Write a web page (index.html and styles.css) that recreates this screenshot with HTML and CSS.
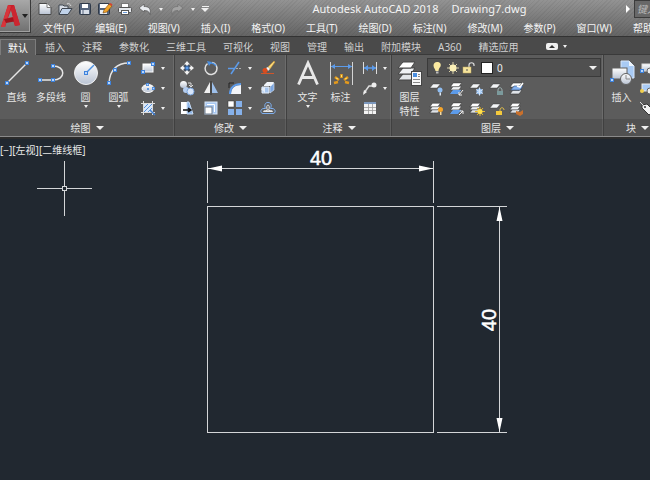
FILE: index.html
```html
<!DOCTYPE html>
<html lang="zh-CN">
  <head>
    <title>Autodesk AutoCAD 2018 - Drawing7.dwg</title>
    <meta charset="UTF-8">
    <meta name="viewport" content="width=device-width, initial-scale=1.0">
    <link rel="stylesheet" href="styles.css">
  </head>

  <body>

    <!-- shared icon parts -->
    <svg class="defs" aria-hidden="true">
      <defs>
        <linearGradient id="metal" x1="0" y1="0" x2="0" y2="1">
          <stop offset="0" stop-color="#ffffff"/>
          <stop offset="1" stop-color="#b9c3d3"/>
        </linearGradient>
        <symbol id="node" viewBox="0 0 4 4">
          <rect x="0.5" y="0.5" width="3" height="3" fill="#b9d6fa" stroke="#3d82dc"/>
        </symbol>
        <symbol id="sheet" viewBox="0 0 16 16">
          <path d="M5 3h9l-4 5H1z" fill="#f4f6f8" stroke="#3c3c3c" stroke-width="0.6"/>
        </symbol>
        <symbol id="stack" viewBox="0 0 16 16">
          <path d="M4 9h9l-3 4H1z" fill="#dfe3e8" stroke="#333" stroke-width="0.6"/>
          <path d="M4 5.500h9l-3 4H1z" fill="#eef0f3" stroke="#333" stroke-width="0.6"/>
          <path d="M4 2h9l-3 4H1z" fill="#fff" stroke="#333" stroke-width="0.6"/>
        </symbol>
      </defs>
    </svg>

    <header class="titlebar">
      <button class="app-menu" aria-label="应用程序菜单">
        <svg width="22" height="24" viewBox="0 0 22 24">
          <path d="M1 23L8 1h6l6 20-5 1-2-6-6 1-2 6z" fill="#c8202a"/>
          <path d="M11 6L8 14l5-1z" fill="#8b8b8b"/>
          <path d="M1 23L8 1l3 1-6 21z" fill="#d8353b"/>
          <path d="M4 15l12-2 1 4-11 2z" fill="#a3141d"/>
          <path d="M14 1l6 20-5 1-4-17z" fill="#cc2630"/>
        </svg>
        <span class="arrow dark"></span>
      </button>

      <div class="titlebar-rows">
        <div class="title-row">
          <div class="quick-access">
            <button aria-label="新建"><svg width="16" height="14" viewBox="0 0 16 14"><path d="M2 1.500h8l4 4v7H2z" fill="url(#metal)" stroke="#4a4a4a"/><path d="M10 1.500v4h4" fill="#fff" stroke="#777"/></svg></button>
            <button aria-label="打开"><svg width="16" height="14" viewBox="0 0 16 14"><path d="M2 12V3h4l1 1h4v3" fill="#d9dee6" stroke="#3f4650"/><path d="M2 12.500l3-6h10l-4 6z" fill="#c1d3ea" stroke="#3f4650"/><path d="M10 2c2-1 3 0 4 2" fill="none" stroke="#ddd"/></svg></button>
            <button aria-label="保存"><svg width="16" height="14" viewBox="0 0 16 14"><rect x="2.500" y="1.500" width="11" height="11" rx="1" fill="#56657c" stroke="#303a48"/><rect x="5" y="2" width="6" height="4" fill="#fff"/><rect x="4" y="8" width="8" height="4" fill="#d7dee8"/><path d="M6 8v4" stroke="#56657c"/></svg></button>
            <button aria-label="另存为"><svg width="16" height="14" viewBox="0 0 16 14"><rect x="1.500" y="1.500" width="11" height="11" rx="1" fill="#56657c" stroke="#303a48"/><rect x="3" y="2" width="8" height="4" fill="#fff"/><rect x="3" y="8" width="7" height="4" fill="#e8edf3"/><path d="M6 11l1-3 5-6 3 2-5 6z" fill="#f0a32a" stroke="#7a4a10" stroke-width="0.600"/><path d="M12 2l3 2 .5-1.500-2-1.500z" fill="#d8422e"/></svg></button>
            <button aria-label="打印"><svg width="16" height="14" viewBox="0 0 16 14"><rect x="4.500" y="1.500" width="7" height="5" fill="#fff" stroke="#777"/><rect x="1.500" y="5.500" width="13" height="5" rx="1" fill="#e4e7eb" stroke="#555"/><rect x="4.500" y="8.500" width="7" height="4" fill="#fff" stroke="#555"/><path d="M6 10.500h4" stroke="#6b9bd8"/></svg></button>
            <button aria-label="放弃"><svg width="16" height="14" viewBox="0 0 16 14"><path d="M2 6l5-4v2.500c5 0 7 2 6 8-1-3-2-4-6-4V10z" fill="#e9ecf0" stroke="#444" stroke-width="0.600"/></svg></button>
            <span class="arrow small"></span>
            <button aria-label="重做"><svg width="16" height="14" viewBox="0 0 16 14"><path d="M14 6L9 2v2.500c-5 0-7 2-6 8 1-3 2-4 6-4V10z" fill="#a2a2a2" stroke="#6c6c6c" stroke-width="0.600"/></svg></button>
            <span class="arrow small"></span>
            <button class="customize" aria-label="自定义快速访问工具栏"><span class="bar"></span><span class="arrow"></span></button>
          </div>
          <h1 class="title"><span>Autodesk AutoCAD 2018</span><span>Drawing7.dwg</span></h1>
          <div class="search">
            <span class="search-arrow"></span>
            <input type="text" aria-label="搜索" placeholder="键入关键字或短语">
          </div>
        </div>

        <nav class="menubar">
          <a href="#">文件(F)</a>
          <a href="#">编辑(E)</a>
          <a href="#">视图(V)</a>
          <a href="#">插入(I)</a>
          <a href="#">格式(O)</a>
          <a href="#">工具(T)</a>
          <a href="#">绘图(D)</a>
          <a href="#">标注(N)</a>
          <a href="#">修改(M)</a>
          <a href="#">参数(P)</a>
          <a href="#">窗口(W)</a>
          <a href="#">帮助(H)</a>
        </nav>
      </div>
    </header>

    <nav class="tabs">
      <button class="tab active">默认</button>
      <button class="tab">插入</button>
      <button class="tab">注释</button>
      <button class="tab">参数化</button>
      <button class="tab">三维工具</button>
      <button class="tab">可视化</button>
      <button class="tab">视图</button>
      <button class="tab">管理</button>
      <button class="tab">输出</button>
      <button class="tab">附加模块</button>
      <button class="tab">A360</button>
      <button class="tab">精选应用</button>
      <button class="minimize" aria-label="最小化功能区"><span class="pill"><span class="arrow up"></span></span><span class="arrow small"></span></button>
    </nav>

    <main class="ribbon">

      <section class="panel draw">
        <div class="panel-body">
          <button class="big">
            <svg width="26" height="26" viewBox="0 0 26 26"><path d="M3 23L23 3" stroke="#e6e6e6" stroke-width="1.500"/><use href="#node" x="1" y="21" width="4" height="4"/><use href="#node" x="21" y="1" width="4" height="4"/></svg>
            <span>直线</span>
          </button>
          <button class="big">
            <svg width="28" height="26" viewBox="0 0 28 26"><path d="M3 20h13c13 0 13-14 0-14" fill="none" stroke="#e6e6e6" stroke-width="1.500"/><use href="#node" x="1" y="18" width="4" height="4"/><use href="#node" x="14" y="18" width="4" height="4"/><use href="#node" x="14" y="4" width="4" height="4"/></svg>
            <span>多段线</span>
          </button>
          <button class="big">
            <svg width="26" height="26" viewBox="0 0 26 26"><circle cx="13" cy="13" r="11.500" fill="url(#metal)" stroke="#f0f0f0"/><path d="M13 13l8-8" stroke="#4b8fe0" stroke-width="1.500"/><use href="#node" x="11" y="11" width="4" height="4"/></svg>
            <span>圆</span>
            <span class="arrow small"></span>
          </button>
          <button class="big">
            <svg width="26" height="26" viewBox="0 0 26 26"><path d="M3 23C4 10 11 3 23 3" fill="none" stroke="#e6e6e6" stroke-width="1.500"/><use href="#node" x="1" y="21" width="4" height="4"/><use href="#node" x="7" y="8" width="4" height="4"/><use href="#node" x="21" y="1" width="4" height="4"/></svg>
            <span>圆弧</span>
            <span class="arrow small"></span>
          </button>
          <div class="column">
            <button class="tool" aria-label="矩形"><svg width="16" height="16" viewBox="0 0 16 16"><rect x="3" y="4" width="10" height="8" fill="url(#metal)" stroke="#fff"/><use href="#node" x="1" y="10" width="4" height="4"/><use href="#node" x="11" y="2" width="4" height="4"/></svg><span class="arrow small"></span></button>
            <button class="tool" aria-label="椭圆"><svg width="16" height="16" viewBox="0 0 16 16"><ellipse cx="8" cy="8.500" rx="6" ry="4" fill="url(#metal)" stroke="#fff"/><circle cx="8" cy="9" r="1" fill="#3d82dc"/><use href="#node" x="6" y="3" width="3" height="3"/><use href="#node" x="12" y="7" width="3" height="3"/></svg><span class="arrow small"></span></button>
            <button class="tool" aria-label="图案填充"><svg width="16" height="16" viewBox="0 0 16 16"><rect x="4" y="4" width="8" height="8" fill="#d9e8fb"/><path d="M4 8l4-4M4 12l8-8M8 12l4-4" stroke="#5590dc"/><path d="M3.500 1v14M12.500 1v14M1 3.500h14M1 12.500h14" stroke="#dcdcdc"/><path d="M10 10l5 5" stroke="#3f7fd4" stroke-width="1.500"/></svg><span class="arrow small"></span></button>
          </div>
        </div>
        <h2 class="panel-title">绘图<span class="arrow"></span></h2>
      </section>

      <section class="panel modify">
        <div class="panel-body">
          <div class="column">
            <button class="tool" aria-label="移动"><svg width="16" height="16" viewBox="0 0 16 16"><path d="M8 1l3 3.500H5zM8 15l3-3.500H5zM1 8l3.500-3v6zM15 8l-3.500-3v6z" fill="#f2f2f2"/><path d="M8 4v8M4 8h8" stroke="#f2f2f2" stroke-width="2"/><rect x="6" y="6" width="4" height="4" fill="#5c9bea" stroke="#27466f"/></svg></button>
            <button class="tool" aria-label="复制"><svg width="16" height="16" viewBox="0 0 16 16"><circle cx="4.500" cy="4.500" r="3.500" fill="url(#metal)"/><circle cx="7" cy="10" r="3" fill="#b4cdf0"/><circle cx="11.500" cy="11.500" r="3.500" fill="#d8e6fa" stroke="#7ba5dd"/><path d="M9 3h3v3m-2-1l2 2 2-2" fill="none" stroke="#ddd"/></svg></button>
            <button class="tool" aria-label="拉伸"><svg width="16" height="16" viewBox="0 0 16 16"><path d="M2 2h6v12H2z" fill="#fff"/><path d="M8 2h2l4 12H8z" fill="#8db4e6" stroke="#c8dcf5"/><path d="M4 10h7M9 8l3 2-3 2" fill="none" stroke="#111" stroke-width="1.500"/></svg></button>
          </div>
          <div class="column">
            <button class="tool" aria-label="旋转"><svg width="16" height="16" viewBox="0 0 16 16"><path d="M9 2.500A6 6 0 1 1 4.500 3.600" fill="none" stroke="#e0e0e0" stroke-width="1.500"/><path d="M6 3.500A5.500 5.500 0 0 1 13 6" fill="none" stroke="#4b8fe0" stroke-width="1.500"/><path d="M4 1l5 1-3 4z" fill="#4b8fe0"/></svg></button>
            <button class="tool" aria-label="镜像"><svg width="16" height="16" viewBox="0 0 16 16"><path d="M7 2v11H1z" fill="#f0f0f0"/><path d="M9 2v11h6z" fill="#9dbfea"/><path d="M8 1v14" stroke="#333"/></svg></button>
            <button class="tool" aria-label="缩放"><svg width="16" height="16" viewBox="0 0 16 16"><rect x="2" y="2" width="12" height="12" fill="#a9c8f0" stroke="#dce9fa"/><rect x="2" y="7" width="7" height="7" fill="#fff" stroke="#6c7c90"/><path d="M4 4.500h7.500V12" fill="none" stroke="#fff"/></svg></button>
          </div>
          <div class="column">
            <button class="tool" aria-label="修剪"><svg width="16" height="16" viewBox="0 0 16 16"><path d="M1 8.500h6" stroke="#5c9bea" stroke-width="1.500"/><path d="M9 8.500h6" stroke="#aaa" stroke-dasharray="2 1"/><path d="M4 14l8-12" stroke="#5c9bea" stroke-width="1.500"/></svg><span class="arrow small"></span></button>
            <button class="tool" aria-label="圆角"><svg width="16" height="16" viewBox="0 0 16 16"><path d="M4 14C4 8 8 5 14 5v9z" fill="#f2f4f8"/><path d="M3 14C3 8 7 4 14 4" fill="none" stroke="#5c9bea" stroke-width="2"/><path d="M2 8V3h5" fill="none" stroke="#222"/></svg><span class="arrow small"></span></button>
            <button class="tool" aria-label="阵列"><svg width="16" height="16" viewBox="0 0 16 16"><rect x="1" y="1" width="6" height="6" fill="#fff" stroke="#333" stroke-width="0.500"/><rect x="9" y="1" width="6" height="6" fill="#86b1ea"/><rect x="1" y="9" width="6" height="6" fill="#86b1ea"/><rect x="9" y="9" width="6" height="6" fill="#86b1ea"/></svg><span class="arrow small"></span></button>
          </div>
          <div class="column">
            <button class="tool" aria-label="删除"><svg width="16" height="16" viewBox="0 0 16 16"><path d="M8 7l6-6 1 1-5 7z" fill="#f8d878" stroke="#c98d28" stroke-width="0.500"/><path d="M6 8l2-1 2 2-2 2z" fill="#f4f4f4"/><circle cx="5" cy="10.500" r="2.500" fill="#dc4b1c"/><path d="M1 13.500h13" stroke="#d0552a"/></svg></button>
            <button class="tool" aria-label="分解"><svg width="16" height="16" viewBox="0 0 16 16"><path d="M4 5l3-3h7l-2 4H4z" fill="#f1f5fa"/><path d="M2 7h7v6H2z" fill="#a8c6ee" stroke="#e9f1fb"/><path d="M10 7l4-4v7l-4 3z" fill="#7ca6de" stroke="#dce8f8" stroke-width="0.600"/><path d="M1 9l4-2v6z" fill="#e4edf9"/></svg></button>
            <button class="tool" aria-label="偏移"><svg width="16" height="16" viewBox="0 0 16 16"><path d="M3 13.500c-3 0-3-5 1-5h1.500C4 5 5 2.500 8 2.500s4 2.500 2.500 6H12c4 0 4 5 1 5z" fill="none" stroke="#7fb0f0"/><path d="M3.500 11.500c0-1 1-1 4-1C6 7 7 5 8 5s2 2 .5 5.500c3 0 4 0 4 1z" fill="none" stroke="#e8e8e8"/></svg></button>
          </div>
        </div>
        <h2 class="panel-title">修改<span class="arrow"></span></h2>
      </section>

      <section class="panel annotate">
        <div class="panel-body">
          <button class="big">
            <svg width="26" height="26" viewBox="0 0 26 26"><path d="M3.500 24.500L13 3l9.500 21.500M7 17.500h12" fill="none" stroke="#e8e8e8" stroke-width="2.800"/></svg>
            <span>文字</span>
            <span class="arrow small"></span>
          </button>
          <button class="big">
            <svg width="26" height="26" viewBox="0 0 26 26"><path d="M2.500 2v23M24.500 2v23" stroke="#d4d4d4"/><path d="M3 6.500h21" stroke="#5c9bea"/><path d="M3 6.500l4-2.500v5zM24 6.500l-4-2.500v5z" fill="#5c9bea"/><path d="M6 23l4-1M7 17l4 3M13.500 14v4M20 17l-4 3M21 23l-4-1" stroke="#e59a1c" stroke-width="2.500"/><path d="M8 18l2 1M13.500 15v2M19 18l-2 1" stroke="#ffe66e"/></svg>
            <span>标注</span>
          </button>
          <div class="column">
            <button class="tool" aria-label="线性"><svg width="16" height="16" viewBox="0 0 16 16"><path d="M1.500 2v12M14.500 2v12" stroke="#ddd"/><path d="M2 8h12" stroke="#5c9bea" stroke-width="1.500"/><path d="M2 8l4-3v6zM14 8l-4-3v6z" fill="#5c9bea"/></svg><span class="arrow small"></span></button>
            <button class="tool" aria-label="引线"><svg width="16" height="16" viewBox="0 0 16 16"><path d="M2 13l5-7h4" fill="none" stroke="#ddd" stroke-width="1.500"/><path d="M1 15l1-5 3 2z" fill="#eee"/><circle cx="12" cy="5" r="2.500" fill="#eee"/></svg><span class="arrow small"></span></button>
            <button class="tool" aria-label="表格"><svg width="16" height="16" viewBox="0 0 16 16"><rect x="2" y="3" width="12" height="11" fill="#f4f4f4"/><rect x="2" y="2" width="12" height="2" fill="#7c98bd"/><path d="M2 7.500h12M2 10.500h12M6.500 4v10M10.500 4v10" stroke="#9a9a9a" stroke-width="0.800"/></svg></button>
          </div>
        </div>
        <h2 class="panel-title">注释<span class="arrow"></span></h2>
      </section>

      <section class="panel layers">
        <div class="panel-body">
          <button class="big">
            <svg width="26" height="26" viewBox="0 0 26 26"><path d="M6 14h12l-4 6H1z" fill="#e3e6ea" stroke="#444"/><path d="M6 8h12l-4 6H1z" fill="#f0f2f5" stroke="#444"/><path d="M6 2h12l-4 6H1z" fill="#fff" stroke="#444"/><rect x="14.500" y="11.500" width="10" height="14" fill="#f8f8f8" stroke="#444"/><rect x="16" y="13" width="4" height="4" fill="#4b8fe0"/><path d="M21 14.500h2M21 16.500h2M16 19.500h7M16 22.500h7" stroke="#888"/></svg>
            <span>图层<br>特性</span>
          </button>
          <div class="layer-tools">
            <div class="layer-select">
              <svg width="16" height="16" viewBox="0 0 16 16"><path d="M8 2c3 0 4.500 2 3.500 4.500C10.500 8 9.500 9 9.500 11h-3C6.500 9 4.500 8 4.500 5.500 4.500 3.500 6 2 8 2z" fill="#fae9a0"/><path d="M7 11.500h2.500v2H7z" fill="#bbb"/></svg>
              <svg width="16" height="16" viewBox="0 0 16 16"><path d="M8 2v12M2 8h12M4 4l8 8M12 4l-8 8" stroke="#d9cfa8"/><circle cx="8" cy="8" r="3.500" fill="#fbf0b6"/></svg>
              <svg width="16" height="16" viewBox="0 0 16 16"><path d="M8 8V5c0-3 5-3 5 0v1" fill="none" stroke="#dcdcdc" stroke-width="1.200"/><rect x="2" y="7" width="8" height="6" fill="#f6e49c" stroke="#c0a95c" stroke-width="0.500"/><path d="M6 9v2" stroke="#555"/></svg>
              <span class="swatch"></span>
              <select aria-label="当前图层"><option>0</option></select>
              <span class="arrow"></span>
            </div>
            <div class="row">
              <button class="tool" aria-label="关"><svg width="16" height="16" viewBox="0 0 16 16"><use href="#sheet" width="13" height="14"/><circle cx="11" cy="9" r="2.500" fill="#8fbdf2"/><path d="M10.500 11.500h1.500v3h-1.500z" fill="#dce9f8"/></svg></button>
              <button class="tool" aria-label="隔离"><svg width="16" height="16" viewBox="0 0 16 16"><use href="#stack" width="16" height="15"/><path d="M4 9h8l-3 4H1z" fill="#5c9bea"/><path d="M14 9l-4 5m0-3v3h3" fill="none" stroke="#eee"/></svg></button>
              <button class="tool" aria-label="冻结"><svg width="16" height="16" viewBox="0 0 16 16"><use href="#sheet" width="13" height="14"/><circle cx="10.500" cy="10.500" r="3" fill="#8fbdf2"/><path d="M10.500 6.500v8M7 8.500l7 4M14 8.500l-7 4" stroke="#d6e7fb"/></svg></button>
              <button class="tool" aria-label="锁定"><svg width="16" height="16" viewBox="0 0 16 16"><use href="#sheet" width="13" height="14"/><path d="M9 11V9c0-3 4-3 4 0v2" fill="none" stroke="#9fb2b2"/><rect x="8" y="10" width="6" height="4" fill="#7b9a9c"/></svg></button>
              <button class="tool" aria-label="置为当前"><svg width="16" height="16" viewBox="0 0 16 16"><use href="#stack" width="16" height="16"/><path d="M5 5h9l-3 4H2z" fill="#85b2ef" stroke="#2c4c78" stroke-width="0.600"/><path d="M8 5l3 1 3-4" fill="none" stroke="#fff" stroke-width="1.500"/></svg></button>
            </div>
            <div class="row">
              <button class="tool" aria-label="打开所有图层"><svg width="16" height="16" viewBox="0 0 16 16"><use href="#stack" width="14" height="15"/><circle cx="11.500" cy="8.500" r="2.500" fill="#f6a52a"/><path d="M11 11h1.500v3H11z" fill="#f5d9a0"/></svg></button>
              <button class="tool" aria-label="取消隔离"><svg width="16" height="16" viewBox="0 0 16 16"><use href="#stack" width="16" height="15"/><path d="M4 9h8l-3 4H1z" fill="#5c9bea"/><path d="M10 14l4-4m-3 0h3v3" fill="none" stroke="#eee"/></svg></button>
              <button class="tool" aria-label="解冻所有图层"><svg width="16" height="16" viewBox="0 0 16 16"><use href="#stack" width="14" height="15"/><path d="M11 6v9M6 10.500h10M8 7l6 7M14 7l-6 7" stroke="#e7b82e"/><circle cx="11" cy="10.500" r="2.500" fill="#ffe14d"/></svg></button>
              <button class="tool" aria-label="解锁"><svg width="16" height="16" viewBox="0 0 16 16"><use href="#sheet" width="13" height="14"/><path d="M11 11V9c0-3 4-3 4 0" fill="none" stroke="#e3c04a"/><rect x="7" y="10" width="6" height="4" fill="#f4c93c"/></svg></button>
              <button class="tool" aria-label="匹配图层"><svg width="16" height="16" viewBox="0 0 16 16"><use href="#stack" width="14" height="15"/><path d="M7 10l4 1 3-2v4l-3 2-4-2z" fill="#c9702c"/></svg></button>
            </div>
          </div>
        </div>
        <h2 class="panel-title">图层<span class="arrow"></span></h2>
      </section>

      <section class="panel block">
        <div class="panel-body">
          <button class="big">
            <svg width="26" height="26" viewBox="0 0 26 26"><path d="M12 1h8l5 5v12H12z" fill="#a9cbf5" stroke="#d8e7fb"/><path d="M20 1v5h5" fill="#eef5fd"/><rect x="3" y="8" width="15" height="11" fill="url(#metal)" stroke="#606060"/><circle cx="17" cy="19" r="5.500" fill="url(#metal)" stroke="#606060"/><path d="M17 15v4h4" fill="none" stroke="#888"/><use href="#node" x="1" y="18" width="4" height="4"/></svg>
            <span>插入</span>
          </button>
          <div class="column">
            <button class="tool" aria-label="创建块"><svg width="16" height="16" viewBox="0 0 16 16"><rect x="3" y="4" width="11" height="7" fill="url(#metal)" stroke="#ddd"/><circle cx="11" cy="11" r="3" fill="#eee" stroke="#666"/><use href="#node" x="1" y="9" width="4" height="4"/></svg></button>
            <button class="tool" aria-label="编辑块"><svg width="16" height="16" viewBox="0 0 16 16"><rect x="3" y="4" width="11" height="7" fill="#a9cbf5" stroke="#eee"/><circle cx="11" cy="11" r="3" fill="#eee" stroke="#666"/><circle cx="3" cy="11" r="2" fill="#f2d04e"/></svg></button>
            <button class="tool" aria-label="编辑属性"><svg width="16" height="16" viewBox="0 0 16 16"><path d="M3 5l5-1 7 7-5 4-7-7z" fill="#f4f4f4" stroke="#333"/><path d="M1 2l4 4" stroke="#ddd"/><circle cx="6" cy="7" r="1" fill="#333"/></svg></button>
          </div>
        </div>
        <h2 class="panel-title">块<span class="arrow"></span></h2>
      </section>

    </main>

    <section class="canvas">
      <svg width="650" height="341" viewBox="0 0 650 341">
        <text class="view-label" x="0" y="15">[−][左视][二维线框]</text>

        <!-- cursor -->
        <path class="line" d="M37 49.500H62M67 49.500H92M64.500 22V47M64.500 52V77"/>
        <rect class="line" x="62.500" y="47.500" width="4" height="4"/>

        <!-- 40 x 40 square -->
        <rect class="line" x="207.500" y="67.500" width="226" height="226"/>

        <!-- horizontal dimension -->
        <path class="line" d="M207.500 22V64M433.500 22V64M208 29.500H433"/>
        <path class="head" d="M208 29.500l14-3v6zM433 29.500l-14-3v6z"/>
        <text class="dim" x="321" y="26">40</text>

        <!-- vertical dimension -->
        <path class="line" d="M437 67.500H507M437 293.500H507M499.500 68V293"/>
        <path class="head" d="M499.500 68l-3 14h6zM499.500 293l-3-14h6z"/>
        <text class="dim" transform="translate(496 181) rotate(-90)">40</text>
      </svg>
    </section>

  </body>
</html>
```
FILE: styles.css
```css
* {
  box-sizing: border-box;
}

body {
  margin: 0;
  min-height: 100vh;
  display: flex;
  flex-direction: column;
  background-color: #212830;
  color: #e6e6e6;
  font-family: "Noto Sans", "Noto Sans CJK SC", sans-serif;
  font-size: 10px;
  line-height: 14px;
}

button {
  margin: 0;
  padding: 0;
  border: none;
  background: none;
  color: inherit;
  font: inherit;
  cursor: pointer;
}

svg {
  display: block;
  flex: none;
}

.defs {
  position: absolute;
  width: 0;
  height: 0;
}

.arrow {
  flex: none;
  width: 0;
  height: 0;
  border-left: 4px solid transparent;
  border-right: 4px solid transparent;
  border-top: 4px solid #f0f0f0;
}

.arrow.small {
  border-width: 3px 2px 0 2px;
}

.arrow.dark {
  border-width: 4px 3px 0 3px;
  border-top-color: #222;
}

.arrow.up {
  border-width: 0 3px 3px 3px;
  border-bottom: 3px solid #333;
}

/* title bar */
.titlebar {
  display: flex;
  height: 37px;
  overflow: hidden;
  background-image:
    repeating-linear-gradient(135deg, rgba(0, 0, 0, 0.05) 0 1px, transparent 1px 3px),
    linear-gradient(#939393, #646464);
  border-bottom: 1px solid #333;
}

.app-menu {
  flex: none;
  display: flex;
  align-items: center;
  width: 31px;
  height: 33px;
  border: 1px solid #3a3a3a;
  border-width: 0 1px 1px 0;
  background-image: linear-gradient(#a8a8a8, #707070);
  box-shadow: inset -1px -1px 0 #a0a0a0;
}

.titlebar-rows {
  flex: 1;
  min-width: 0;
}

.title-row {
  display: flex;
  align-items: center;
  height: 18px;
}

.quick-access {
  display: flex;
  align-items: center;
  gap: 4px;
  padding-left: 6px;
}

.quick-access .arrow.small {
  margin: 0 2px;
}

.customize {
  display: flex;
  flex-direction: column;
  align-items: center;
  gap: 1px;
}

.bar {
  width: 7px;
  height: 1px;
  background-color: #f0f0f0;
}

.title {
  flex: 1;
  display: flex;
  justify-content: center;
  gap: 13px;
  margin: 0;
  padding-left: 4px;
  color: #f4f4f4;
  font-size: 11px;
  font-weight: normal;
  line-height: 18px;
  white-space: nowrap;
}

.search {
  flex: none;
  display: flex;
  align-items: center;
  gap: 4px;
  width: 24px;
}

.search-arrow {
  border-left: 4px solid #fff;
  border-top: 4px solid transparent;
  border-bottom: 4px solid transparent;
}

.search input {
  width: 120px;
  height: 18px;
  padding: 0 2px;
  border: 1px solid #3c3c3c;
  background-color: #686868;
  color: #fff;
  font: inherit;
  font-style: italic;
}

.search input::placeholder {
  color: #b8b8b8;
}

.menubar {
  display: flex;
  gap: 21px;
  padding-left: 12px;
  line-height: 20px;
}

.menubar a {
  flex: none;
  color: #f4f4f4;
  text-decoration: none;
}

/* ribbon tabs */
.tabs {
  display: flex;
  gap: 1px;
  height: 18px;
  padding-top: 2px;
  background-color: #4a4a4a;
  border-bottom: 1px solid #3a3a3a;
}

.tab {
  flex: none;
  height: 16px;
  padding: 0 8px;
  color: #d0d0d0;
  line-height: 14px;
}

.tab.active {
  border: 1px solid #7c7c7c;
  border-bottom: none;
  padding: 0 7px;
  background-color: #5c5c5c;
  color: #fff;
  line-height: 12px;
}

.minimize {
  display: flex;
  align-items: center;
  gap: 5px;
  margin-left: 18px;
}

.pill {
  display: flex;
  align-items: center;
  justify-content: center;
  width: 12px;
  height: 7px;
  border-radius: 2px;
  background-color: #f0f0f0;
}

/* ribbon panels */
.ribbon {
  display: flex;
  height: 84px;
  overflow: hidden;
  background-color: #5c5c5c;
  border-bottom: 2px solid #2c2c2c;
  box-shadow: inset 0 -1px 0 #8a8a8a;
}

.panel {
  flex: none;
  display: flex;
  flex-direction: column;
  margin-bottom: 1px;
  border-right: 1px solid #404040;
  box-shadow: inset -1px 0 0 #6c6c6c;
}

.draw {
  width: 175px;
}

.modify {
  width: 112px;
}

.annotate {
  width: 105px;
}

.layers {
  width: 212px;
}

.block {
  width: 68px;
}

.panel-body {
  flex: 1;
  display: flex;
  gap: 5px;
  padding: 3px 2px 0 4px;
}

.draw .panel-body {
  padding-left: 0;
}

.modify .panel-body {
  gap: 8px;
}

.layers .panel-body,
.block .panel-body {
  gap: 1px;
  padding-left: 1px;
}

.panel-title {
  display: flex;
  align-items: center;
  justify-content: center;
  gap: 5px;
  height: 17px;
  margin: 0;
  background-color: rgba(0, 0, 0, 0.12);
  font-size: 10px;
  font-weight: normal;
}

.big {
  flex: none;
  display: flex;
  flex-direction: column;
  align-items: center;
  min-width: 33px;
  padding: 2px 3px 0;
}

.big + .big {
  margin-left: -5px;
}

.big span {
  margin-top: 4px;
}

.big .arrow {
  margin-top: 1px;
}

.column {
  display: flex;
  flex-direction: column;
  gap: 4px;
  padding-top: 2px;
}

.tool {
  display: flex;
  align-items: center;
  gap: 5px;
}

.layer-tools {
  flex: 1;
  min-width: 0;
}

.layer-select {
  display: flex;
  align-items: center;
  height: 19px;
  padding: 0 3px 0 1px;
  border: 1px solid #3a3a3a;
  background-color: #505050;
}

.swatch {
  width: 12px;
  height: 12px;
  margin: 0 4px;
  border: 1px solid #222;
  background-color: #fff;
}

.layer-select select {
  flex: 1;
  min-width: 0;
  padding: 0;
  border: none;
  background: none;
  color: #f0f0f0;
  font: inherit;
  appearance: none;
}

.row {
  display: flex;
  gap: 4px;
  margin: 4px 0 0 2px;
}

/* drawing area */
.canvas {
  flex: 1;
}

.view-label {
  fill: #e8e8e8;
}

.line {
  fill: none;
  stroke: #d4d6d8;
}

.head {
  fill: #fff;
}

.dim {
  fill: #fff;
  stroke: #fff;
  stroke-width: 0.5px;
  font-family: "Liberation Sans", sans-serif;
  font-size: 20px;
  text-anchor: middle;
}
```
